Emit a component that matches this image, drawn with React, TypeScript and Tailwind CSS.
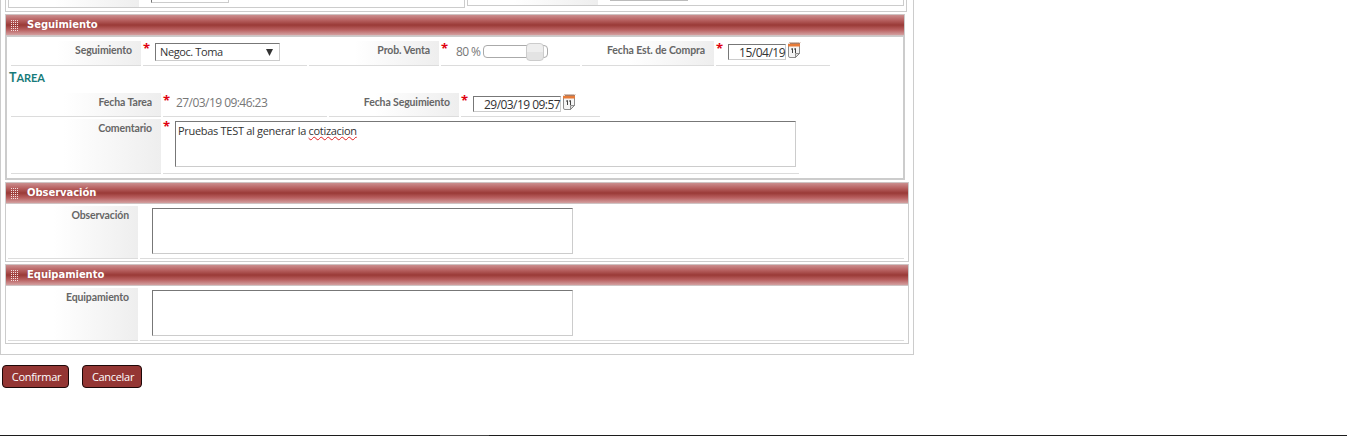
import type { ReactNode } from "react";

function Title({ children }: { children: ReactNode }) {
  return (
    <div className="flex h-[22px] shrink-0 items-center border-y border-y-[#cfc3c3] bg-[linear-gradient(to_bottom,#cb8f8f_0%,#b96464_24%,#9a3a37_50%,#b96060_74%,#d3a0a0_100%)] pl-[5px]">
      <svg width="8" height="12" className="mt-px mr-[8px] shrink-0" shapeRendering="crispEdges">
        <defs>
          <pattern id="grip" width="2" height="2" patternUnits="userSpaceOnUse">
            <rect width="1" height="1" fill="#f4dede" />
          </pattern>
        </defs>
        <rect width="8" height="12" fill="url(#grip)" />
      </svg>
      <span className="font-['DejaVu_Sans'] text-[10px] leading-[20px] font-bold tracking-[-0.05px] text-white">{children}</span>
    </div>
  );
}

function Label({ className, children }: { className: string; children: ReactNode }) {
  return (
    <div className={`mr-[2px] shrink-0 border-b border-[#dcdcdc] bg-[linear-gradient(to_right,#fff_35%,#eee_100%)] bg-origin-border pr-[9px] text-right font-['Lato'] text-[10.5px] leading-[18px] font-bold tracking-[-0.12px] whitespace-nowrap text-[#666] ${className}`}>
      {children}
    </div>
  );
}

function Value({ className, children }: { className: string; children: ReactNode }) {
  return <div className={`mr-[2px] flex shrink-0 items-start border-b border-[#dcdcdc] ${className}`}>{children}</div>;
}

function Star() {
  return <span className="w-[12px] shrink-0 text-[13px] leading-[15px] font-bold text-[#e00010]">*</span>;
}

function Calendar() {
  return (
    <svg width="13" height="17" viewBox="0 0 13 17" className="shrink-0">
      <path d="M.5 3.5H11.5V11.5L7.5 15.5H2Q.5 15.5 .5 14Z" fill="#f5f5f5" stroke="#8d8d8d" />
      <path d="M0 2H12V4.5H0Z" fill="#e77b38" />
      <path d="M1 1.5L2 .5L3 2L4 .5L5 2L6 .5L7 2L8 .5L9 2L10 .5L11 2L12 .5" fill="none" stroke="#884825" strokeWidth=".8" />
      <path d="M11.5 11.5H7.5V15.5Z" fill="#ddd" stroke="#777" strokeWidth=".8" />
      <path d="M3 7.3L4.5 6.5V11M6 7.3L7.5 6.5V11" fill="none" stroke="#444" strokeWidth="1" />
    </svg>
  );
}

function NotePanel({ title }: { title: string }) {
  return (
    <section className="mb-[2px] ml-[4px] flex h-[80px] w-[904px] flex-col border-x border-b border-[#ccc]">
      <Title>{title}</Title>
      <div className="flex h-[55px] pt-[2px] pl-[2px]">
        <Label className="h-[53px] w-[130px]">{title}</Label>
        <Value className="h-[53px] w-[764px] pt-[2px] pl-[12px]">
          <div className="h-[46px] w-[421px] border border-t-[#777] border-r-[#ccc] border-b-[#ccc] border-l-[#777]" />
        </Value>
      </div>
    </section>
  );
}

const field = "border border-t-[#777] border-r-[#ccc] border-b-[#ccc] border-l-[#777] text-[#333]";

export default function App() {
  return (
    <main className="flex h-[436px] w-full flex-col overflow-hidden bg-white font-['Open_Sans',sans-serif]">
      <div className="flex h-[355px] w-[914px] shrink-0 flex-col border-x border-b border-[#ccc]">
        <div className="mb-[2px] ml-[4px] flex h-[12px] w-[902px] shrink-0 items-start border-x border-b border-[#ccc] pl-[2px]">
          <div className="flex h-[8px] w-[457px] border-x border-b border-[#ccc]">
            <div className="h-[7px] w-[130px] bg-[linear-gradient(to_right,#fff_35%,#eee)]" />
            <div className="ml-[12px] h-[3px] w-[78px] border-x border-b border-r-[#ccc] border-b-[#ccc] border-l-[#777]" />
          </div>
          <div className="ml-[2px] flex h-[6px] w-[437px] border-x border-b border-[#ccc]">
            <div className="h-[5px] w-[130px] bg-[linear-gradient(to_right,#fff_35%,#eee)]" />
            <div className="ml-[12px] h-px w-[78px] bg-[#bbb]" />
          </div>
        </div>

        <section className="mb-[2px] ml-[4px] flex h-[166px] w-[900px] shrink-0 flex-col">
          <div className="border-x border-[#ccc]"><Title>Seguimiento</Title></div>
          <div className="flex h-[144px] flex-col border-x-2 border-t border-b-2 border-[#ccc] pt-[4px] pl-[4px]">
            <div className="flex h-[25px] shrink-0">
              <Label className="w-[130px]">Seguimiento</Label>
              <Value className="w-[164px]">
                <Star />
                <div className={`mt-[2px] flex h-[18px] w-[125px] items-center justify-between pr-[6px] pl-[4px] text-[11px] tracking-[-0.4px] ${field}`}>
                  <span>Negoc. Toma</span>
                  <svg width="7" height="7"><path d="M0 0H7L3.5 7Z" fill="#333" /></svg>
                </div>
              </Value>
              <Label className="w-[130px]">Prob. Venta</Label>
              <Value className="w-[139px]">
                <Star />
                <span className="mt-[2px] ml-[3px] w-[27px] shrink-0 text-[12px] leading-[18px] tracking-[-0.6px] whitespace-nowrap text-[#777]">80 %</span>
                <div className="mt-[4px] flex h-[13px] w-[65px] items-center justify-end rounded-[4px] border border-[#aaa] pr-[3px]">
                  <div className="h-[18px] w-[18px] shrink-0 rounded-[4px] border border-[#ccc] bg-[linear-gradient(#eee_50%,#e3e3e3_50%)]" />
                </div>
              </Value>
              <Label className="w-[132px]">Fecha Est. de Compra</Label>
              <Value className="w-[114px]">
                <Star />
                <div className={`mt-[3px] mr-[2px] h-[16px] w-[58px] text-right text-[12px] leading-[15px] tracking-[-0.5px] ${field}`}>15/04/19</div>
                <div className="mt-px"><Calendar /></div>
              </Value>
            </div>
            <h2 className="-ml-[2px] h-[27px] shrink-0 font-['Lato'] text-[11px] leading-[24px] font-bold tracking-[-0.1px] text-[#177b79]"><span className="text-[12.5px]">T</span>AREA</h2>
            <div className="mb-[2px] flex h-[24px] shrink-0">
              <Label className="w-[150px]">Fecha Tarea</Label>
              <Value className="w-[164px]">
                <Star />
                <span className="mt-px ml-px text-[12px] leading-[18px] tracking-[-0.55px] whitespace-nowrap text-[#777]">27/03/19 09:46:23</span>
              </Value>
              <Label className="w-[130px]">Fecha Seguimiento</Label>
              <Value className="w-[139px]">
                <Star />
                <div className={`mt-[3px] mr-[2px] h-[16px] w-[88px] text-right text-[12px] leading-[15px] tracking-[-0.55px] whitespace-nowrap ${field}`}>29/03/19 09:57</div>
                <div className="mt-px"><Calendar /></div>
              </Value>
            </div>
            <div className="flex h-[55px] shrink-0">
              <Label className="w-[150px]">Comentario</Label>
              <Value className="w-[636px]">
                <Star />
                <div className={`mt-[2px] h-[46px] w-[621px] pl-[2px] text-[11px] leading-[18px] tracking-[-0.3px] ${field}`}>
                  Pruebas TEST al generar la <span className="underline decoration-[#e02020] decoration-wavy decoration-[0.7px] underline-offset-[1px]">cotizacion</span>
                </div>
              </Value>
            </div>
          </div>
        </section>

        <NotePanel title="Observación" />
        <NotePanel title="Equipamiento" />
      </div>

      <div className="mt-[10px] ml-[2px] flex shrink-0 gap-[13px] text-[11px] leading-[20px] tracking-[-0.3px] text-white">
        <button className="h-[23px] w-[67px] rounded-[4px] border border-[#1d0808] bg-[#943634] pl-[2px]">Confirmar</button>
        <button className="h-[23px] w-[60px] rounded-[4px] border border-[#1d0808] bg-[#943634] pl-[2px]">Cancelar</button>
      </div>
      <div className="mt-auto h-px w-full shrink-0 bg-[linear-gradient(to_right,#1c1c1c_440px,#444_440px,#444_489px,#1c1c1c_489px)]" />
    </main>
  );
}
